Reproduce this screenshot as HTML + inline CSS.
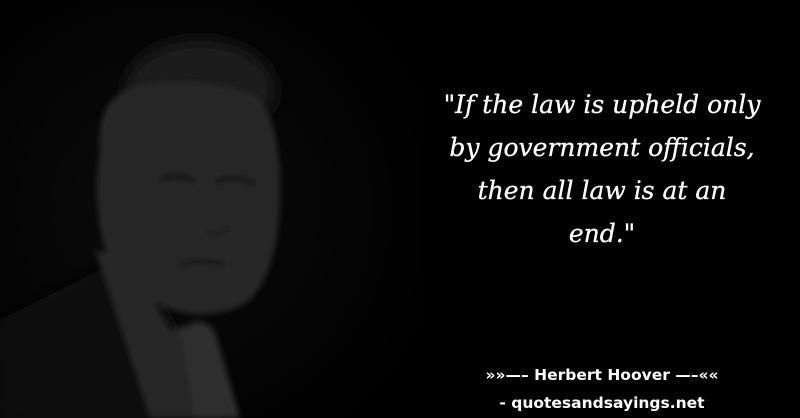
<!DOCTYPE html>
<html><head><style>
html,body{margin:0;padding:0;}
body{width:800px;height:418px;background:#000;position:relative;overflow:hidden;}
svg{position:absolute;left:0;top:0;}
.q{position:absolute;left:412px;width:380px;text-align:center;color:#fff;font-family:"DejaVu Serif","Liberation Serif",serif;font-style:italic;font-size:25px;line-height:43px;top:83px;-webkit-text-stroke:0.3px #fff;}
.a{position:absolute;left:412px;width:380px;text-align:center;color:#fff;font-family:"DejaVu Sans","Liberation Sans",sans-serif;font-weight:bold;font-size:15.5px;}
</style></head><body>
<svg width="420" height="418" viewBox="0 0 420 418">
<defs>
<filter id="b"><feGaussianBlur stdDeviation="8"/></filter>
<filter id="b2"><feGaussianBlur stdDeviation="3"/></filter>
<radialGradient id="bg" cx="0.4" cy="0.5" r="0.7"><stop offset="0" stop-color="#0b0b0b"/><stop offset="1" stop-color="#000"/></radialGradient>
</defs>
<rect width="420" height="418" fill="url(#bg)"/>
<g filter="url(#b)">
<ellipse cx="200" cy="90" rx="75" ry="50" fill="#1a1a1a"/>
<path d="M0 320 Q60 290 100 270 L140 260 L230 418 L0 418Z" fill="#0c0c0c"/>
</g>
<g filter="url(#b2)">
<path d="M95 250 L130 260 L170 330 L200 320 L215 330 L240 418 L150 418 Z" fill="#282828"/>
<path d="M180 330 L210 325 L240 418 L195 418Z" fill="#2e2e2e"/>
<path d="M100 150 Q95 95 140 85 Q200 75 255 95 Q282 120 280 200 Q278 270 250 300 Q220 320 180 312 Q130 300 105 250 Q92 200 100 150Z" fill="#262626"/>
<path d="M160 180 Q180 172 195 182" stroke="#111" stroke-width="4" fill="none"/>
<path d="M215 182 Q235 174 255 184" stroke="#111" stroke-width="4" fill="none"/>
<path d="M178 265 Q205 258 225 265" stroke="#151515" stroke-width="4" fill="none"/>
<path d="M205 230 Q220 240 230 225" stroke="#1a1a1a" stroke-width="3" fill="none"/>
</g>
</svg>
<div class="q">"If the law is upheld only<br>by government officials,<br>then all law is at an<br>end."</div>
<div class="a" style="top:366px;">»»—– Herbert Hoover —–««</div>
<div class="a" style="top:394px;">- quotesandsayings.net</div>
</body></html>
